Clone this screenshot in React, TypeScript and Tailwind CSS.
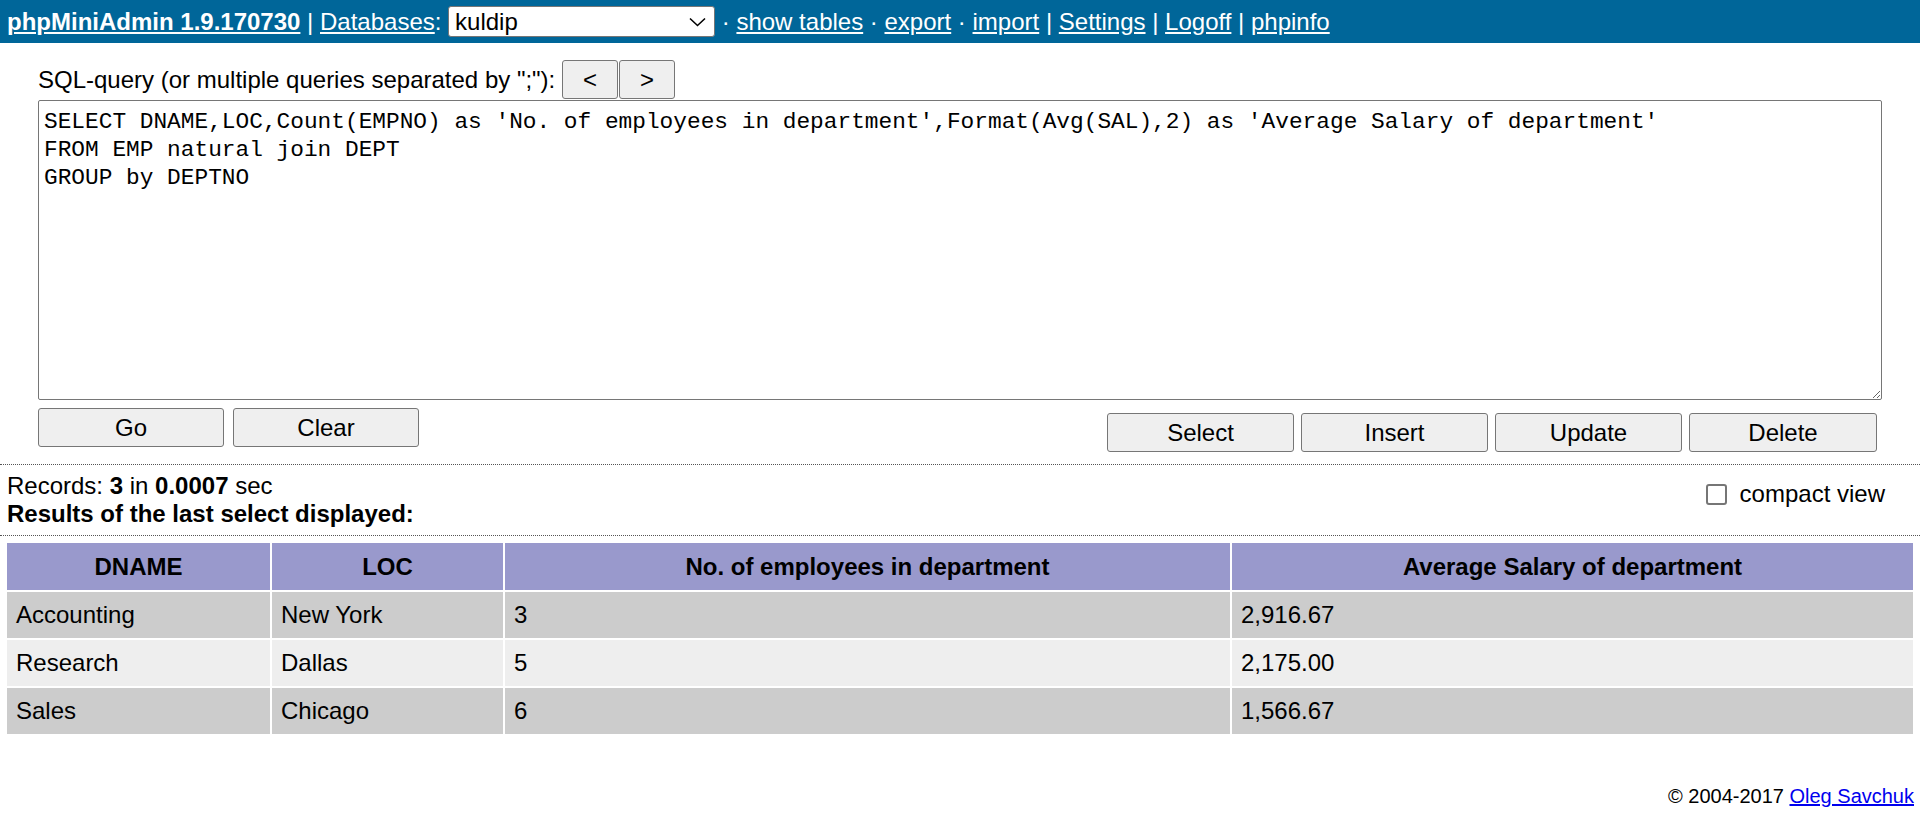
import React from "react";

const sql = `SELECT DNAME,LOC,Count(EMPNO) as 'No. of employees in department',Format(Avg(SAL),2) as 'Average Salary of department'
FROM EMP natural join DEPT
GROUP by DEPTNO`;

const rows = [
  ["Accounting", "New York", "3", "2,916.67"],
  ["Research", "Dallas", "5", "2,175.00"],
  ["Sales", "Chicago", "6", "1,566.67"],
];

const btn =
  "h-[39px] rounded-[3px] border border-[#767676] bg-[#efefef] text-[24px] text-black flex items-center justify-center";

function Sep({ c }: { c: string }) {
  return <span className="whitespace-pre">{` ${c} `}</span>;
}

export default function App() {
  return (
    <div className="min-h-[816px] bg-white text-black font-['Liberation_Sans',Arial,sans-serif] text-[24px] leading-[1.15]">
      {/* Top bar */}
      <div className="h-[43px] bg-[#006699] text-white flex items-center pl-[7px] whitespace-nowrap">
        <a className="font-bold underline">phpMiniAdmin 1.9.170730</a>
        <Sep c="|" />
        <a className="underline">Databases</a>
        <span className="whitespace-pre">: </span>
        <div className="w-[267px] h-[31px] bg-white rounded-[3px] border border-[#767676] text-black flex items-center justify-between pl-[6px] pr-[8px]">
          <span>kuldip</span>
          <svg width="17" height="10" viewBox="0 0 17 10" fill="none">
            <path d="M1 1.5 L8.5 8.5 L16 1.5" stroke="#000" strokeWidth="1.6" />
          </svg>
        </div>
        <Sep c="·" />
        <a className="underline">show tables</a>
        <Sep c="·" />
        <a className="underline">export</a>
        <Sep c="·" />
        <a className="underline">import</a>
        <Sep c="|" />
        <a className="underline">Settings</a>
        <Sep c="|" />
        <a className="underline">Logoff</a>
        <Sep c="|" />
        <a className="underline">phpinfo</a>
      </div>

      {/* SQL form */}
      <div className="px-[38px] pt-[17px]">
        <div className="flex items-center h-[39px]">
          <span className="whitespace-pre">SQL-query (or multiple queries separated by ";"): </span>
          <div className="flex gap-[1px]">
            <button className={`${btn} w-[56px]`}>&lt;</button>
            <button className={`${btn} w-[56px]`}>&gt;</button>
          </div>
        </div>
        <textarea
          readOnly
          defaultValue={sql}
          className="mt-[1px] block w-full h-[300px] border border-[#767676] rounded-[2px] px-[5px] pt-[7px] font-['Liberation_Mono','DejaVu_Sans_Mono',monospace] text-[22.8px] leading-[28px] text-black outline-none resize"
        />
        <div className="flex justify-between pr-[5px]">
          <div className="flex gap-[9px] mt-[8px]">
            <button className={`${btn} w-[186px]`}>Go</button>
            <button className={`${btn} w-[186px]`}>Clear</button>
          </div>
          <div className="flex gap-[7px] mt-[13px]">
            <button className={`${btn} w-[187px]`}>Select</button>
            <button className={`${btn} w-[187px]`}>Insert</button>
            <button className={`${btn} w-[187px]`}>Update</button>
            <button className={`${btn} w-[188px]`}>Delete</button>
          </div>
        </div>
      </div>

      <div className="mt-[12px] border-t border-dotted border-[#555]" />

      {/* Results info */}
      <div className="flex justify-between pl-[7px] pr-[35px] pt-[7px]">
        <div>
          <div>
            Records: <b>3</b> in <b>0.0007</b> sec
          </div>
          <div className="font-bold">Results of the last select displayed:</div>
        </div>
        <label className="flex items-center gap-[13px] h-[44px] self-start">
          <span className="w-[21px] h-[21px] rounded-[3px] border-2 border-[#767676] bg-white" />
          <span>compact view</span>
        </label>
      </div>

      <div className="mt-[8px] border-t border-dotted border-[#555]" />

      {/* Result table */}
      <div className="px-[5px] pt-[5px]">
        <table className="w-full border-separate border-spacing-[2px] table-fixed">
          <thead>
            <tr className="bg-[#9999cc]">
              <th className="w-[263px] h-[47px] font-bold text-center">DNAME</th>
              <th className="w-[231px] h-[47px] font-bold text-center">LOC</th>
              <th className="w-[725px] h-[47px] font-bold text-center">No. of employees in department</th>
              <th className="h-[47px] font-bold text-center">Average Salary of department</th>
            </tr>
          </thead>
          <tbody>
            {rows.map((r, i) => (
              <tr key={r[0]} className={i % 2 === 0 ? "bg-[#cccccc]" : "bg-[#eeeeee]"}>
                {r.map((c, j) => (
                  <td key={j} className="h-[46px] pl-[9px] text-left">
                    {c}
                  </td>
                ))}
              </tr>
            ))}
          </tbody>
        </table>
      </div>

      {/* Footer */}
      <div className="mt-[49px] pr-[6px] text-right text-[20px]">
        © 2004-2017 <a className="text-[#0000ee] underline">Oleg Savchuk</a>
      </div>
    </div>
  );
}
